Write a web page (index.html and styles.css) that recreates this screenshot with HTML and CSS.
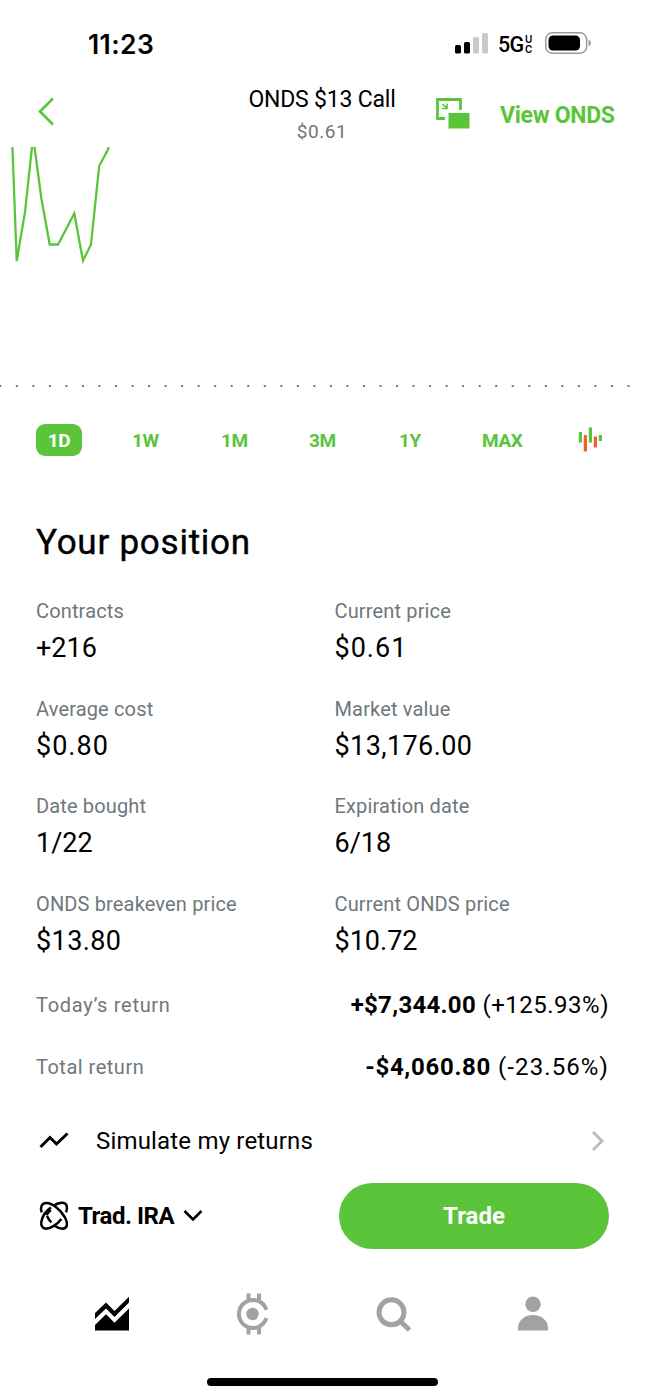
FILE: index.html
```html
<!DOCTYPE html>
<html lang="en">
<head>
<meta charset="utf-8">
<title>ONDS $13 Call</title>
<link rel="stylesheet" href="styles.css">
</head>
<body>
<main class="screen">
  <div class="status">
    <span class="time">11:23</span>
    <div class="indicators">
      <svg class="signal" width="34" height="22" viewBox="0 0 34 22">
        <rect x="0" y="13" width="6" height="8.5" rx="1.6"/>
        <rect x="9" y="10" width="6" height="11.5" rx="1.6"/>
        <rect class="off" x="18" y="5" width="6" height="16.5" rx="1.6"/>
        <rect class="off" x="27" y="1" width="6" height="20.500" rx="1.6"/>
      </svg>
      <span class="network">5G</span>
      <span class="carrier"><span>U</span><span>C</span></span>
      <svg class="battery" width="47" height="22" viewBox="0 0 47 22">
        <rect class="shell" x=".8" y=".8" width="40.800" height="20.400" rx="6.500"/>
        <rect x="3.500" y="3.500" width="31.500" height="15" rx="4.500"/>
        <path class="tip" d="M43.500 7.500Q46 8.500 46 11T43.500 14.500Z"/>
      </svg>
    </div>
  </div>

  <header class="header">
    <svg class="back" width="20" height="30" viewBox="0 0 20 30"><path d="M17 1.500L4 14.500L17 27.500"/></svg>
    <div class="heading">
      <h1 class="title">ONDS $13 Call</h1>
      <div class="price">$0.61</div>
    </div>
    <svg class="pip" width="34" height="31" viewBox="0 0 34 31">
      <path class="frame" d="M9 20.500H1.500V1.500H24.500V12"/>
      <path class="arrow" d="M6.500 6L10.500 10M11 5.500V10.500H6"/>
      <rect x="12.500" y="15" width="21" height="15.500"/>
    </svg>
    <span class="view">View ONDS</span>
  </header>

  <svg class="chart" width="645" height="244" viewBox="0 147 645 244">
    <path class="line" d="M12.300 144L16.700 261L25 212L32.300 144M34.100 144L41.300 198L49.700 244.500H58L74.300 213.500L83 260.700L91 244.500L99.200 166L108 149.500L109 144"/>
    <path class="baseline" d="M-.7 386H632"/>
  </svg>

  <nav class="ranges">
    <span class="range active">1D</span>
    <span class="range">1W</span>
    <span class="range">1M</span>
    <span class="range">3M</span>
    <span class="range">1Y</span>
    <span class="range max">MAX</span>
    <svg class="candles" width="26" height="26" viewBox="0 0 26 26">
      <path d="M2.400 5V15.500M12.400 .5V15.500M22.400 8V14"/>
      <path class="down" d="M7.400 8V24.500M17.400 9.500V20.500"/>
    </svg>
  </nav>

  <section class="position">
    <h2 class="section-title">Your position</h2>
    <dl class="grid">
      <div class="cell"><dt>Contracts</dt><dd>+216</dd></div>
      <div class="cell"><dt>Current price</dt><dd class="cents">$0.61</dd></div>
      <div class="cell"><dt>Average cost</dt><dd class="cents">$0.80</dd></div>
      <div class="cell"><dt>Market value</dt><dd class="dollars">$13,176.00</dd></div>
      <div class="cell"><dt>Date bought</dt><dd>1/22</dd></div>
      <div class="cell"><dt>Expiration date</dt><dd>6/18</dd></div>
      <div class="cell"><dt>ONDS breakeven price</dt><dd class="dollars">$13.80</dd></div>
      <div class="cell"><dt>Current ONDS price</dt><dd>$10.72</dd></div>
    </dl>
    <div class="return today"><span class="label">Today’s return</span><span class="amount"><b>+$7,344.00</b> (+125.93%)</span></div>
    <div class="return total"><span class="label">Total return</span><span class="amount"><b>-$4,060.80</b> (-23.56%)</span></div>
    <div class="simulate">
      <svg class="trend" width="30" height="18" viewBox="0 0 30 18"><path d="M1.500 15L11 5.500L17.500 12L28.500 1.500"/></svg>
      <span class="simulate-text">Simulate my returns</span>
      <svg class="next" width="14" height="22" viewBox="0 0 14 22"><path d="M2 2L11 11L2 20"/></svg>
    </div>
  </section>

  <div class="actions">
    <svg class="atom" width="30" height="30" viewBox="57 64 90 90">
      <path d="M65 98C60 82 65 70 79 70C96 70 120 88 134 112C146 134 141 147 127 147C119 147 112 144 105 139"/>
      <path d="M101 78C118 67 136 66 140 78C142 86 141 92 138 98M93 84C80 92 68 108 64 126C62 138 68 147 78 147C92 147 112 134 124 118"/>
      <path d="M79 106L92 91M81 109C84 116 88 122 94 128"/>
    </svg>
    <span class="account">Trad. IRA</span>
    <svg class="caret" width="20" height="14" viewBox="0 0 20 14"><path d="M1.500 2L10 10.500L18.500 2"/></svg>
    <button class="trade">Trade</button>
  </div>

  <nav class="tabs">
    <svg width="44" height="44" viewBox="0 0 44 44">
      <path class="on" d="M5 21L16 10.500L24.500 19L39 4.800V10.500L24.500 25L16 16.500L5 27ZM5 33L16 22.200L24.500 30.700L39 16.500V38.500H5Z"/>
    </svg>
    <svg width="44" height="44" viewBox="0 0 44 44">
      <path class="coin" d="M36.300 17.800A14 14 0 1 0 36.300 26.200M18.500 1.500V9M29 1.500V9M18.500 35V42.500M29 35V42.500"/>
      <circle cx="22.500" cy="22" r="6.200"/>
    </svg>
    <svg width="44" height="44" viewBox="0 0 44 44">
      <circle class="lens" cx="20.500" cy="20.300" r="12.500"/>
      <path class="lens" d="M29 29L38.500 38"/>
    </svg>
    <svg width="44" height="44" viewBox="0 0 44 44">
      <circle cx="22" cy="12.200" r="7.700"/>
      <path d="M7 38.500V36C7 29 13 23 22 23S37 29 37 36V38.500Z"/>
    </svg>
  </nav>
  <div class="home"></div>
</main>
</body>
</html>
```

FILE: styles.css
```css
* { box-sizing: border-box; }
body {
  margin: 0;
  background: #fff;
  color: #000;
  font-family: Roboto, "Liberation Sans", sans-serif;
}
h1, h2, dl, dt, dd { margin: 0; font-weight: 400; }
svg { display: block; flex: none; overflow: visible; }
.screen {
  width: 645px;
  height: 1398px;
  overflow: hidden;
  display: flex;
  flex-direction: column;
  white-space: nowrap;
}

.status {
  height: 86px;
  padding: 0 53px 0 88px;
  display: flex;
  justify-content: space-between;
  align-items: center;
}
.time { font: 600 26.500px/32px Inter, sans-serif; letter-spacing: .4px; padding-top: 2px; }
.indicators { display: flex; align-items: center; }
.signal .off { fill: #c9c9c9; }
.network { font: 500 21.500px/24px Roboto, sans-serif; margin-left: 9px; width: 27px; letter-spacing: -.8px; padding-top: 3px; }
.carrier { display: flex; flex-direction: column; width: 10px; font: 600 10px/10px Inter, sans-serif; padding-top: 1px; }
.battery { margin-left: 10px; }
.battery .shell { fill: none; stroke: #9b9b9b; stroke-width: 1.500; }
.battery .tip { fill: #9b9b9b; }

.header {
  height: 61px;
  display: grid;
  grid-template-columns: 36px 190px 192px 18px 64px 1fr;
}
.back { grid-column: 2; margin-top: 11px; }
.back path { fill: none; stroke: #5ac53b; stroke-width: 2.600; }
.heading { grid-column: 3; text-align: center; }
.title { font-size: 23px; line-height: 28px; letter-spacing: -.2px; }
.price { font-size: 19px; line-height: 24px; margin-top: 6px; color: #6f777c; letter-spacing: .6px; }
.pip { grid-column: 5; margin-top: 12px; fill: #5ac53b; }
.pip .frame { fill: none; stroke: #5ac53b; stroke-width: 2.800; }
.pip .arrow { fill: none; stroke: #5ac53b; stroke-width: 1.600; }
.view { color: #5ac53b; font-size: 23px; font-weight: 700; line-height: 28px; padding-top: 16px; letter-spacing: -.3px; }

.chart { overflow: hidden; }
.line { fill: none; stroke: #5ac53b; stroke-width: 2.300; }
.baseline { fill: none; stroke: #777; stroke-width: 2; stroke-dasharray: 2 14.530; }

.ranges {
  height: 99px;
  padding: 0 41px 0 36px;
  display: grid;
  grid-template-columns: 96px 89px 88px 90px 83px 1fr 26px;
  align-items: center;
  color: #5ac53b;
  font-size: 19px;
  font-weight: 700;
  letter-spacing: -.4px;
}
.range.active {
  width: 46px;
  height: 32px;
  margin-bottom: 1px;
  border-radius: 9px;
  background: #5ac53b;
  color: #fff;
  text-align: center;
  line-height: 33px;
}
.candles { margin-bottom: 1px; }
.candles path { fill: none; stroke: #5ac53b; stroke-width: 3.200; }
.candles .down { stroke: #f15f2b; }

.position { padding: 33px 36px 0; }
.section-title { font-size: 35px; line-height: 40px; letter-spacing: .75px; -webkit-text-stroke: .4px #000; }
.grid { margin-top: 36.400px; height: 374.600px; display: grid; grid-template-columns: 298.500px 1fr; grid-auto-rows: 97.500px; }
dt, .label { color: #6f777c; font-size: 20px; line-height: 24px; letter-spacing: .15px; }
dd { font-size: 27px; line-height: 34px; margin-top: 8px; }
dd.dollars { letter-spacing: .4px; }
dd.cents { letter-spacing: 1px; }
.return { height: 62px; display: flex; justify-content: space-between; align-items: center; }
.amount { font-size: 24px; }
.today .label { letter-spacing: .7px; }
.today .amount { letter-spacing: .5px; }
.today b { letter-spacing: .3px; }
.total .label { letter-spacing: .5px; }
.total .amount { letter-spacing: 1.100px; }
.total b { letter-spacing: .7px; }
.amount b { font-weight: 700; }
.simulate { display: flex; align-items: center; height: 62px; margin-top: 12px; padding: 0 4px 0 3px; }
.trend path { fill: none; stroke: #000; stroke-width: 3; }
.simulate-text { margin-left: 27px; flex: 1; font-size: 24px; letter-spacing: .18px; }
.next path { fill: none; stroke: #b5bbc0; stroke-width: 2.800; }

.actions { height: 66px; margin-top: 11.500px; padding: 0 36px 0 39px; display: flex; align-items: center; }
.atom { fill: none; stroke: #000; stroke-width: 7.500; }
.account { margin-left: 9px; font-size: 24px; font-weight: 700; letter-spacing: -.45px; }
.caret { margin-left: 9px; fill: none; stroke: #000; stroke-width: 2.600; }
.trade {
  margin-left: auto;
  width: 270px;
  height: 66px;
  border: 0;
  border-radius: 33px;
  background: #5ac53b;
  color: #fff;
  font: 700 24px/28px Roboto, sans-serif;
}

.tabs { margin-top: 43px; padding: 0 90px; display: flex; justify-content: space-between; fill: #a2a2a2; }
.tabs .on { fill: #000; }
.coin { fill: none; stroke: #a2a2a2; stroke-width: 4; }
.lens { fill: none; stroke: #a2a2a2; stroke-width: 5; }
.home { width: 231px; height: 8px; margin: 42px 0 0 207px; border-radius: 4px; background: #000; }
```
